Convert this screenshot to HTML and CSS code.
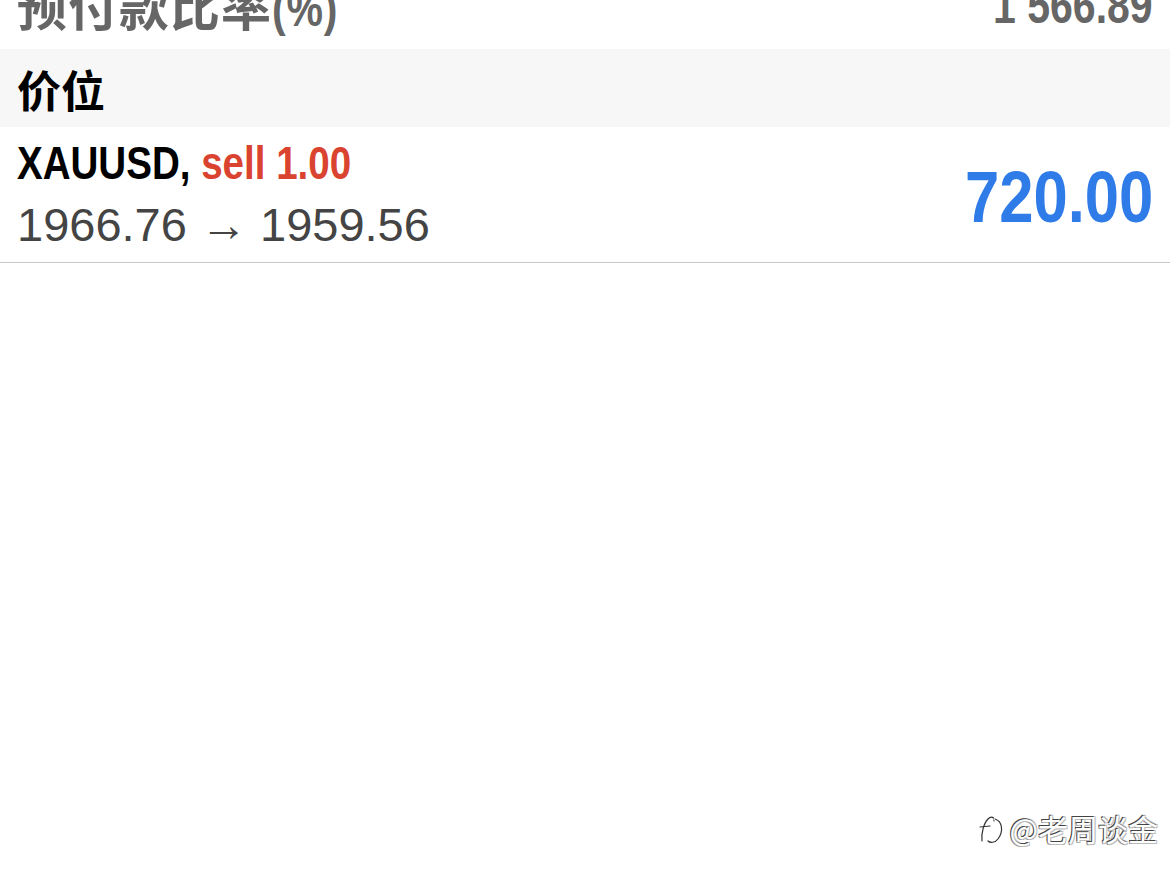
FILE: index.html
```html
<!DOCTYPE html>
<html lang="zh-CN">
<head>
    <meta charset="UTF-8">
    <meta name="viewport" content="width=device-width, initial-scale=1.0">
    <title>交易</title>
    <link rel="stylesheet" href="styles.css">
</head>
<body>
    <div class="list">
        <div class="row row-top">
            <span class="row-label">预付款比率<span class="narrow">(%)</span></span>
            <span class="row-value"><span class="narrow narrow-right">1 566.89</span></span>
        </div>

        <div class="section">价位</div>

        <div class="pos">
            <div class="pos-info">
                <div class="pos-title"><span class="narrow"><span class="sym">XAUUSD,</span> <span class="sell">sell 1.00</span></span></div>
                <div class="pos-price">1966.76 → 1959.56</div>
            </div>
            <div class="pos-profit"><span class="narrow narrow-right">720.00</span></div>
        </div>
    </div>

    <div class="watermark">
        <svg class="wm-logo" width="28" height="34" viewBox="0 0 28 34">
            <path d="M4 30 C3 22 6 12 10 8 C13 5 17 6 16 10" fill="none" stroke="#fff" stroke-width="3" stroke-linecap="round"/>
            <path d="M4 30 C3 22 6 12 10 8 C13 5 17 6 16 10" fill="none" stroke="#333" stroke-width="1.2" stroke-linecap="round"/>
            <path d="M2 16 L12 15" fill="none" stroke="#333" stroke-width="1.2" stroke-linecap="round"/>
            <path d="M17 8 C24 10 26 20 20 28 C17 32 12 32 10 30" fill="none" stroke="#fff" stroke-width="3" stroke-linecap="round"/>
            <path d="M17 8 C24 10 26 20 20 28 C17 32 12 32 10 30" fill="none" stroke="#333" stroke-width="1.2" stroke-linecap="round"/>
        </svg>
        <span class="wm-text">@老周谈金</span>
    </div>
</body>
</html>
```

FILE: styles.css
```css
body {
    margin: 0;
    background: #fff;
    font-family: "Liberation Sans", Arial, "Noto Sans CJK SC", sans-serif;
    overflow: hidden;
}
/* condensed look of the app font */
.narrow {
    display: inline-block;
    transform: scaleX(0.82);
    transform-origin: left center;
    white-space: nowrap;
}
.narrow-right {
    transform-origin: right center;
}
.list {
    margin-top: -41px;
}
.row {
    display: flex;
    justify-content: space-between;
    align-items: center;
    height: 90px;
    padding: 0 17px;
}
.row-label,
.row-value {
    font-weight: bold;
    font-size: 50px;
    color: #666;
}
.row-label {
    letter-spacing: 1px;
}
.row-value {
    position: relative;
    top: 2px;
}
.section {
    background: #f7f7f7;
    height: 78px;
    line-height: 80px;
    padding: 0 17px;
    font-family: "Noto Sans CJK SC", sans-serif;
    font-weight: bold;
    font-size: 44px;
    color: #000;
}
.pos {
    display: flex;
    justify-content: space-between;
    align-items: center;
    height: 135px;
    padding: 0 17px;
    border-bottom: 1px solid #c8c8c8;
}
.pos-info {
    margin-top: 2px;
}
.pos-title {
    font-weight: bold;
    font-size: 47px;
    line-height: 52px;
    color: #000;
}
.sell {
    color: #d9432f;
}
.pos-price {
    font-size: 47px;
    line-height: 60px;
    margin-top: 6px;
    color: #444;
}
.pos-profit {
    font-weight: bold;
    font-size: 72px;
    margin-top: 4px;
    color: #2f7be8;
}
.pos-profit .narrow {
    transform: scaleX(0.855);
}
.watermark {
    position: absolute;
    right: 12px;
    top: 806px;
    display: flex;
    align-items: center;
    gap: 4px;
}
.wm-text {
    font-family: "Noto Sans CJK SC", sans-serif;
    font-size: 30px;
    color: #fff;
    text-shadow: -1px -1px 0 #444, 1px 1px 0 #bbb, 1px -1px 0 #bbb, -1px 1px 0 #999;
}
```
